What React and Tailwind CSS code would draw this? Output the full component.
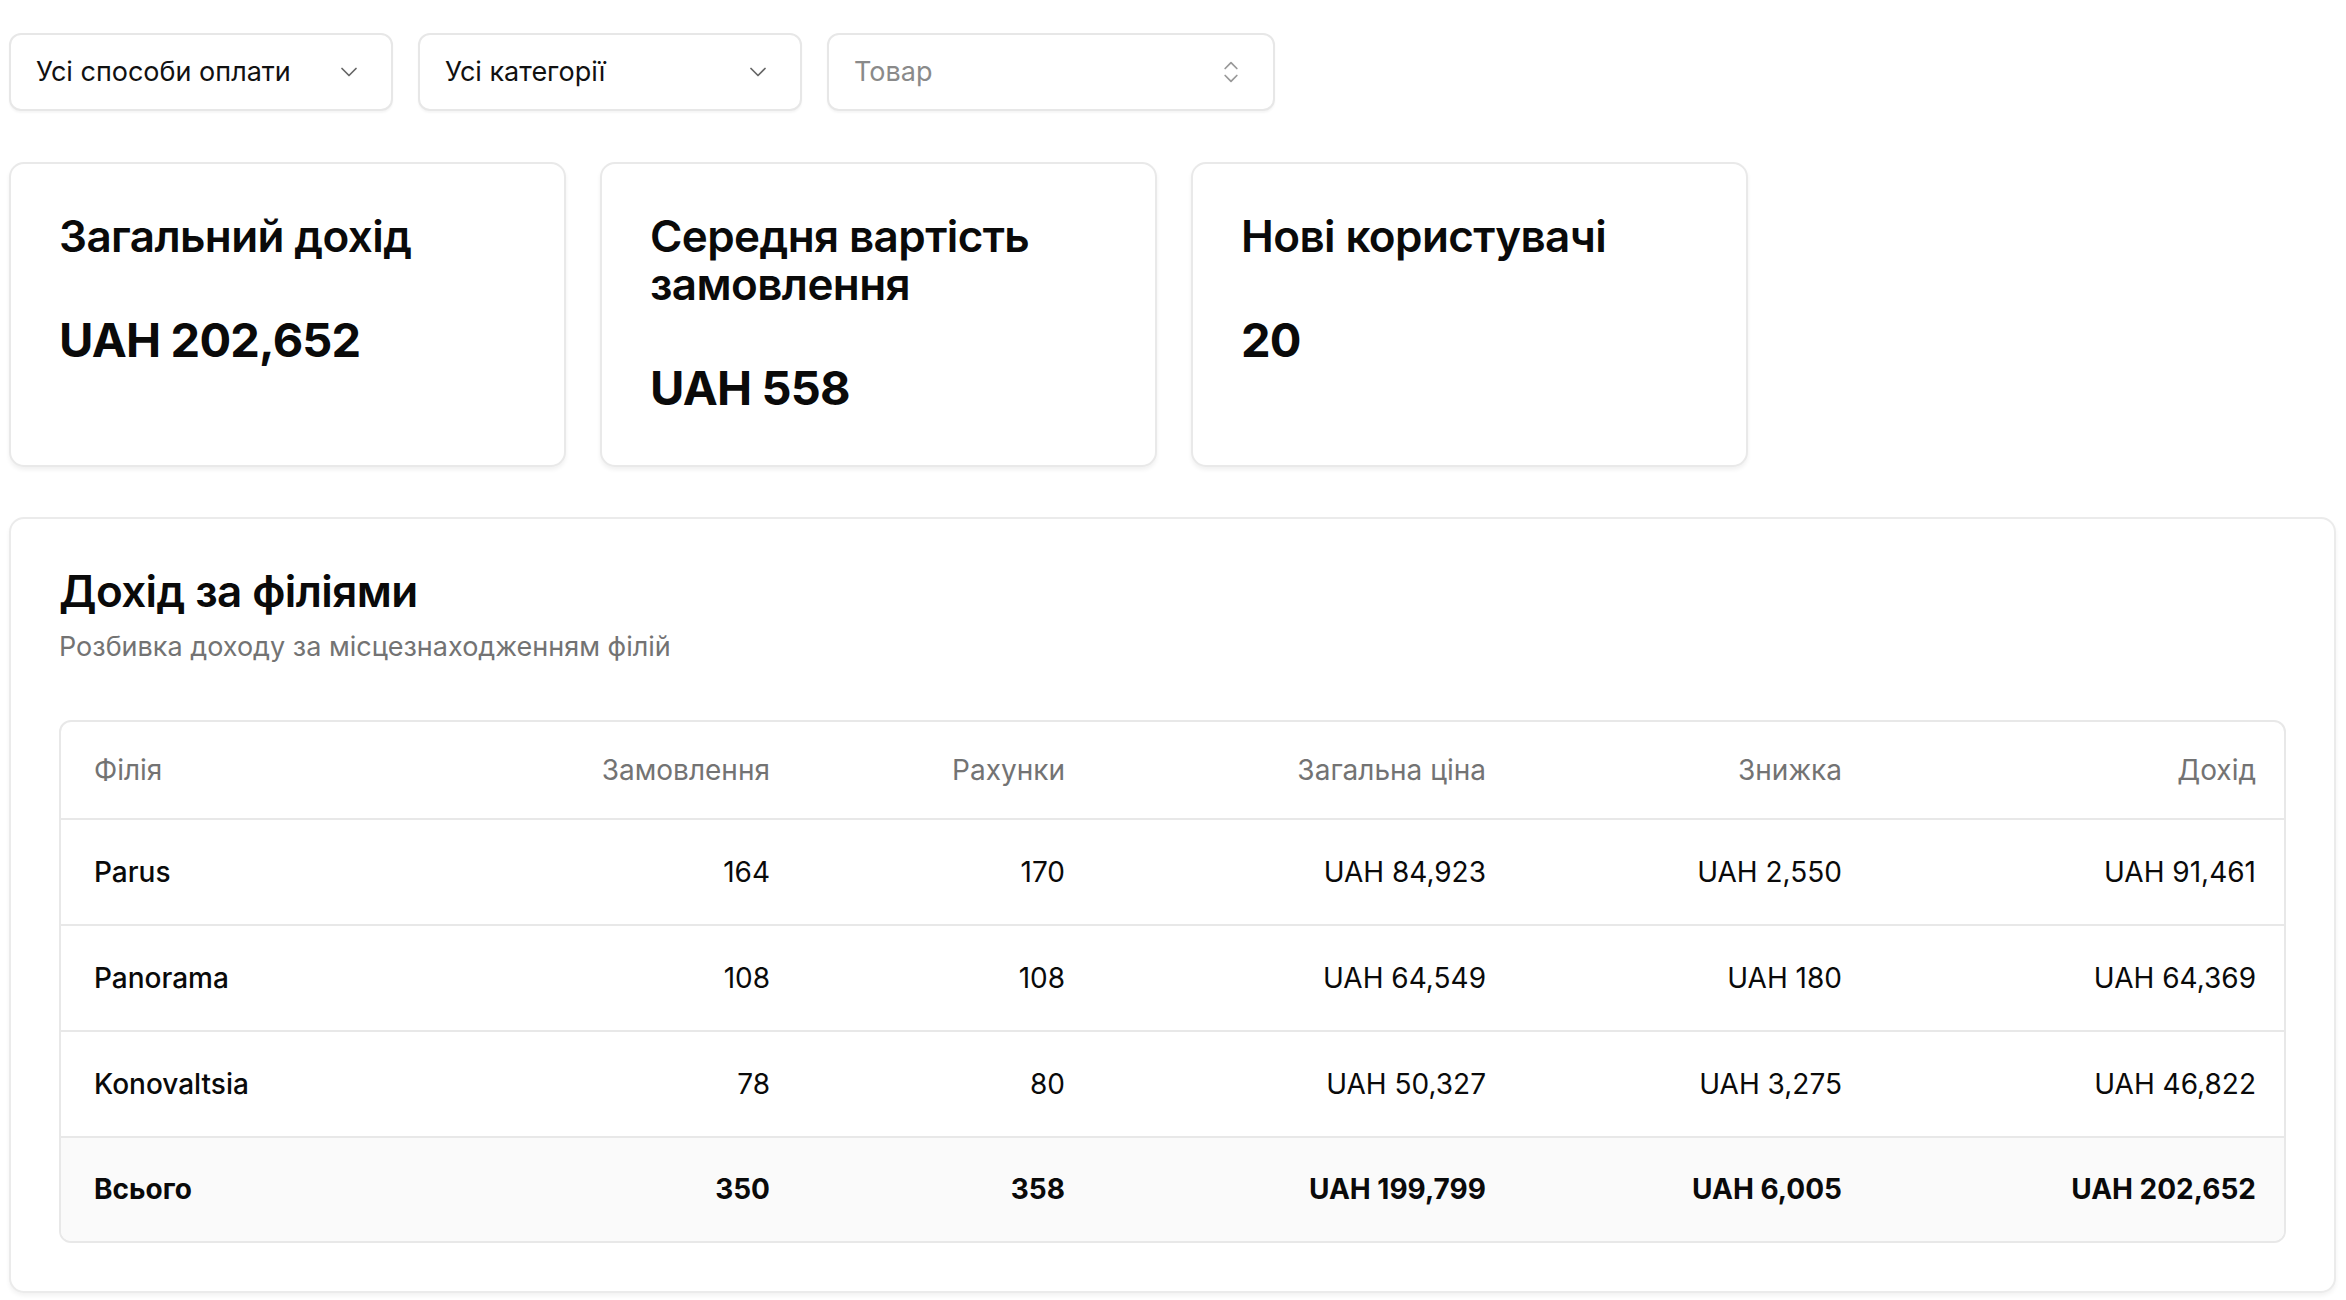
import React from "react";
import { ChevronDown, ChevronsUpDown } from "lucide-react";

const rows = [
  ["Parus", "164", "170", "UAH 84,923", "UAH 2,550", "UAH 91,461"],
  ["Panorama", "108", "108", "UAH 64,549", "UAH 180", "UAH 64,369"],
  ["Konovaltsia", "78", "80", "UAH 50,327", "UAH 3,275", "UAH 46,822"],
];
const total = ["Всього", "350", "358", "UAH 199,799", "UAH 6,005", "UAH 202,652"];
const heads = ["Філія", "Замовлення", "Рахунки", "Загальна ціна", "Знижка", "Дохід"];
const widths = ["w-[442px]", "w-[300px]", "w-[295px]", "w-[421px]", "w-[356px]", "w-[414px]"];

function Sel({ w, text, muted, updown }) {
  return (
    <div className={`${w} h-[78px] rounded-[12px] border-2 border-[#e7e7e7] bg-white flex items-center justify-between pl-[25px] pr-[28px] shadow-[0_2px_2px_rgba(0,0,0,0.04)]`}>
      <span className={`text-[27px] ${muted ? "text-[#8a8a8a]" : "text-[#111]"}`}>{text}</span>
      {updown ? <ChevronsUpDown size={28} strokeWidth={1.5} className="text-[#999]" /> : <ChevronDown size={28} strokeWidth={1.5} className="text-[#666]" />}
    </div>
  );
}

function Card({ title, value }) {
  return (
    <div className="w-[557px] h-[305px] rounded-[15px] border-2 border-[#e9e9e9] bg-white px-[48px] pt-[48px] shadow-[0_3px_4px_rgba(0,0,0,0.06)]">
      <div className="text-[44px] font-semibold leading-[48px] tracking-[-0.6px] text-[#0a0a0a]">{title}</div>
      <div className="mt-[52px] text-[47px] font-bold leading-[56px] tracking-[-0.8px] text-[#0a0a0a]">{value}</div>
    </div>
  );
}

export default function App() {
  return (
    <div className="min-h-[1300px] bg-white px-[9px] pt-[33px] text-[#0a0a0a]" style={{ fontFamily: "Inter, 'Noto Sans', sans-serif" }}>
      <div className="flex gap-[25px]">
        <Sel w="w-[384px]" text="Усі способи оплати" />
        <Sel w="w-[384px]" text="Усі категорії" />
        <Sel w="w-[448px]" text="Товар" muted updown />
      </div>
      <div className="flex gap-[34px] mt-[51px]">
        <Card title="Загальний дохід" value="UAH 202,652" />
        <Card title={<>Середня вартість<br />замовлення</>} value="UAH 558" />
        <Card title="Нові користувачі" value="20" />
      </div>
      <div className="mt-[50px] w-[2327px] rounded-[15px] border-2 border-[#ebebeb] bg-white px-[48px] pt-[46px] pb-[48px] shadow-[0_3px_4px_rgba(0,0,0,0.05)]">
        <div className="text-[44px] font-semibold leading-[52px] tracking-[-0.6px]">Дохід за філіями</div>
        <div className="mt-[10px] text-[27px] text-[#737373]">Розбивка доходу за місцезнаходженням філій</div>
        <div className="mt-[52px] rounded-[12px] border-2 border-[#e8e8e8] overflow-hidden">
          <table className="w-full table-fixed border-collapse text-[28px]">
            <thead>
              <tr className="h-[97px] border-b-2 border-[#e8e8e8]">
                {heads.map((h, i) => (
                  <th key={i} className={`${widths[i]} font-normal text-[#737373] px-[33px] ${i === 0 ? "text-left" : "text-right"}`}>{h}</th>
                ))}
              </tr>
            </thead>
            <tbody>
              {rows.map((r, ri) => (
                <tr key={ri} className="h-[106px] border-b-2 border-[#e8e8e8]">
                  {r.map((c, i) => (
                    <td key={i} className={`px-[33px] ${i === 0 ? "text-left font-medium" : "text-right"}`}>{c}</td>
                  ))}
                </tr>
              ))}
              <tr className="h-[104px] bg-[#fafafa]">
                {total.map((c, i) => (
                  <td key={i} className={`px-[33px] font-bold ${i === 0 ? "text-left" : "text-right"}`}>{c}</td>
                ))}
              </tr>
            </tbody>
          </table>
        </div>
      </div>
    </div>
  );
}
